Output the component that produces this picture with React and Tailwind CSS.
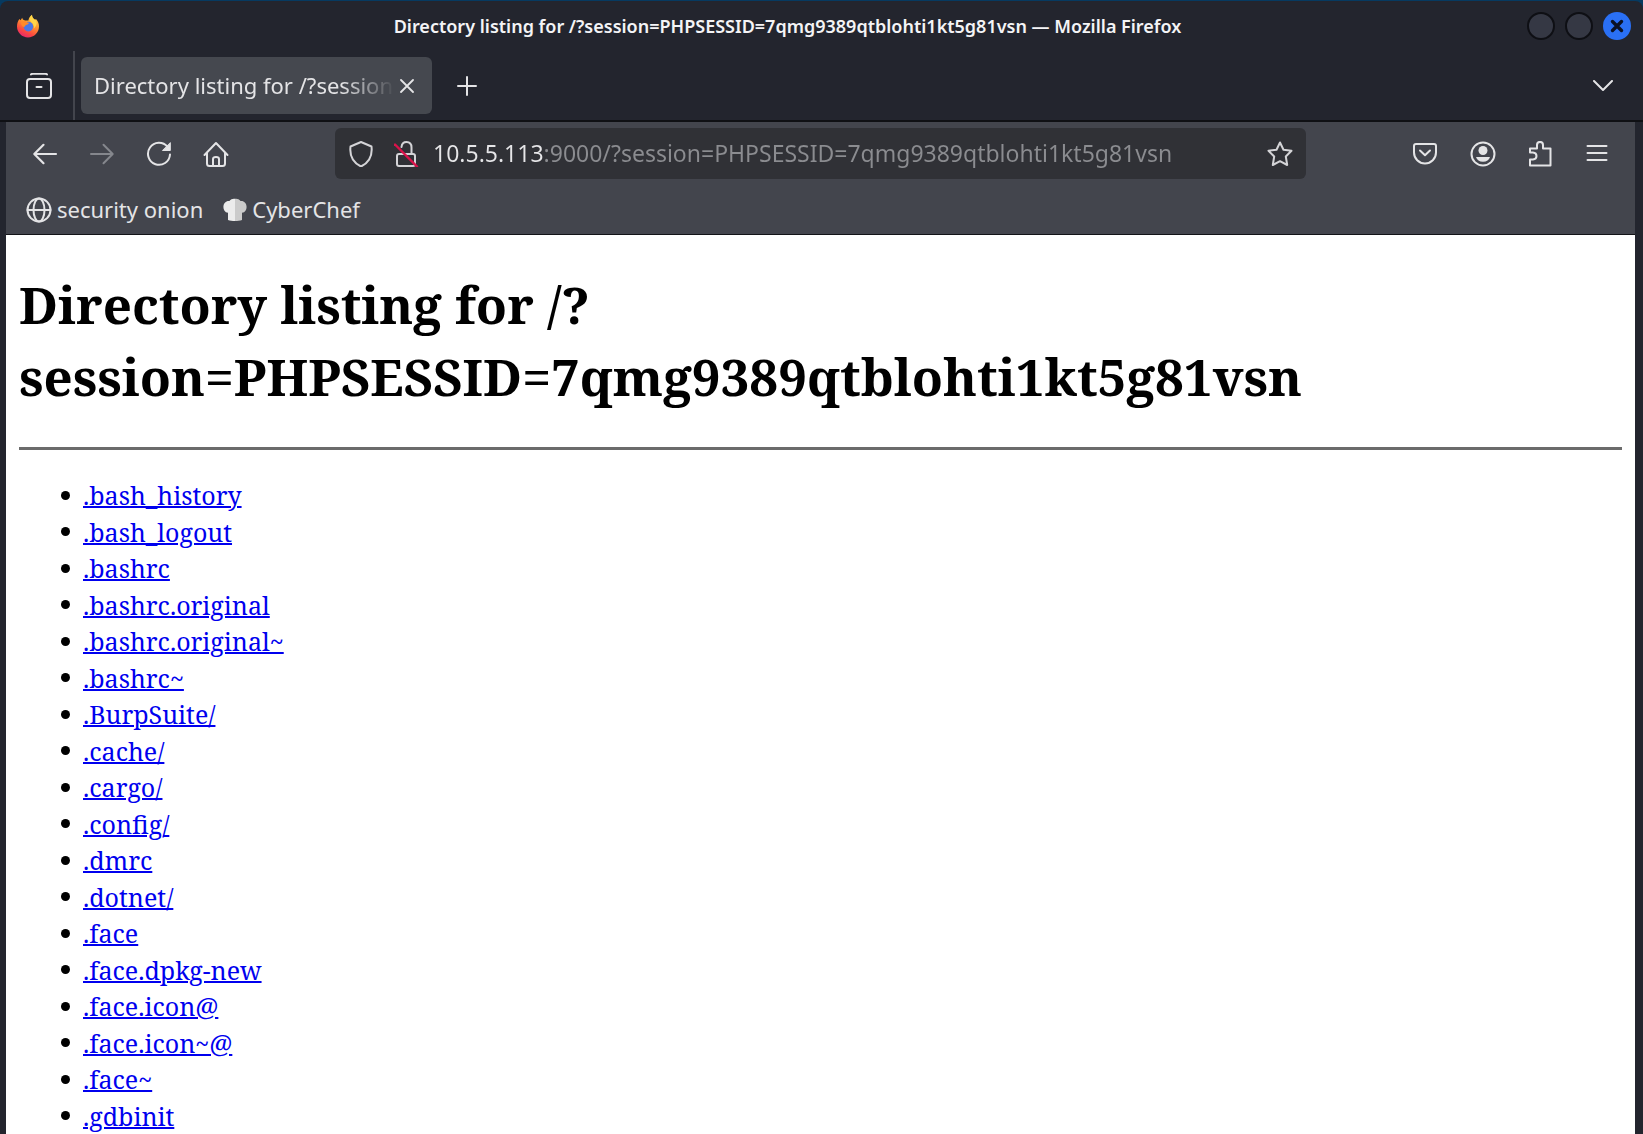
import React from "react";

const files = [
  ".bash_history", ".bash_logout", ".bashrc", ".bashrc.original", ".bashrc.original~", ".bashrc~",
  ".BurpSuite/", ".cache/", ".cargo/", ".config/", ".dmrc", ".dotnet/", ".face", ".face.dpkg-new",
  ".face.icon@", ".face.icon~@", ".face~", ".gdbinit",
];

function Icon({ size = "size-[26px]", children, ...rest }) {
  return (
    <svg viewBox="0 0 26 26" className={size} fill="none" stroke="currentColor" strokeWidth="2" strokeLinecap="round" strokeLinejoin="round" aria-hidden="true" {...rest}>
      {children}
    </svg>
  );
}

function ToolButton({ label, disabled, children }) {
  return (
    <button aria-label={label} disabled={disabled} className="flex h-12 w-[57px] shrink-0 items-center justify-center text-[#e4e4e6] disabled:text-[#85878d]">
      {children}
    </button>
  );
}

function FirefoxLogo() {
  return (
    <svg viewBox="0 0 24 24" className="size-6" aria-hidden="true">
      <defs>
        <linearGradient id="flame" x1="0.8" y1="0" x2="0.3" y2="1">
          <stop offset="0" stopColor="#ffe14d" />
          <stop offset="0.4" stopColor="#ff9a2e" />
          <stop offset="0.75" stopColor="#fb4a40" />
          <stop offset="1" stopColor="#e8256e" />
        </linearGradient>
      </defs>
      <path d="M3.400 5L4.600 6.200L6.200 3.800C6.600 5.600 7.600 6.200 9 6.400L12.400 6.600C12.800 4.200 14 2.400 16 .8C16 2.800 17 4.200 18.600 5.600L20.200 5.200C22.200 7.400 23 9.800 23 12.600A11 11 0 0 1 12 23.400A11 11 0 0 1 1 12.600C1 9.400 2 7 3.400 5Z" fill="url(#flame)" />
      <path d="M16 1C13.600 3 13 5.600 14.800 7.800C17 9.800 18.400 11.600 17.800 14.800C21.600 11 21.400 7.400 18.400 5.600C16.800 4.200 16 2.800 16 1Z" fill="#ffd648" />
      <circle cx="12.400" cy="12.600" r="4.800" fill="#4b78e6" />
      <path d="M5 8.400C7.400 6.600 10 7.200 11.400 8.400L13 8.800C12.600 10.400 10.800 10.800 9.600 11.200C9 11.800 9 12.800 8 13C6 12.600 5 10.600 5 8.400Z" fill="#ff8a2b" />
    </svg>
  );
}

function ChefHat() {
  return (
    <svg viewBox="0 0 24 24" className="size-6" aria-hidden="true">
      <path d="M5 22V14.800C1.800 14.400 .4 12 .4 9C.4 5 3.200 2.600 6.400 3C8 1 10 .4 12 .8V23C9.400 23 7 22.800 5 22Z" fill="#ececec" />
      <path d="M19 22V14.800C22.200 14.400 23.600 12 23.600 9C23.600 5 20.800 2.600 17.600 3C16 1 14 .4 12 .8V23C14.600 23 17 22.800 19 22Z" fill="#cbcbcb" />
    </svg>
  );
}

function TitleBar() {
  return (
    <header className="flex h-[50px] shrink-0 items-center pl-4 pr-3">
      <FirefoxLogo />
      <div className="flex-1 truncate pl-2 text-center text-[18px] font-semibold text-[#f4f4f6]">
        Directory listing for /?session=PHPSESSID=7qmg9389qtblohti1kt5g81vsn — Mozilla Firefox
      </div>
      <div className="flex gap-[10px]">
        <button aria-label="Minimize" className="size-7 rounded-full border-2 border-[#0e0f14] bg-[#353844]" />
        <button aria-label="Maximize" className="size-7 rounded-full border-2 border-[#0e0f14] bg-[#353844]" />
        <button aria-label="Close window" className="flex size-7 items-center justify-center rounded-full bg-[#2a70f5] text-[#0b1226]">
          <svg viewBox="0 0 14 14" className="size-[14px]" stroke="currentColor" strokeWidth="3.400" strokeLinecap="round" aria-hidden="true">
            <path d="M2.500 2.500L11.500 11.500M11.500 2.500L2.500 11.500" />
          </svg>
        </button>
      </div>
    </header>
  );
}

function TabStrip() {
  return (
    <div className="flex h-[71px] shrink-0 items-stretch border-b-2 border-[#0f1014] text-[#e4e4e6]">
      <button aria-label="Firefox View" className="flex w-[73px] shrink-0 items-center justify-center pl-1">
        <Icon>
          <path d="M5 1.500Q5.500 .8 7 .8H19Q20.500 .8 21 1.500" />
          <rect x="1" y="6" width="24" height="19" rx="3" />
          <path d="M10.500 14H15.500" />
        </Icon>
      </button>
      <div className="mr-[6px] w-[2px] bg-[#43454d]" />
      <div className="my-[6px] flex w-[351px] items-center rounded-md bg-[#45484f] px-[13px]">
        <span className="flex-1 overflow-hidden whitespace-nowrap text-[22px] [mask-image:linear-gradient(to_right,black_82%,transparent)]">
          Directory listing for /?session
        </span>
        <button aria-label="Close tab" className="flex size-6 shrink-0 items-center justify-center">
          <svg viewBox="0 0 14 14" className="size-[14px]" stroke="currentColor" strokeWidth="1.800" strokeLinecap="round" aria-hidden="true">
            <path d="M1 1L13 13M13 1L1 13" />
          </svg>
        </button>
      </div>
      <button aria-label="New tab" className="ml-[25px] flex items-center">
        <svg viewBox="0 0 20 20" className="size-5" stroke="currentColor" strokeWidth="2" strokeLinecap="round" aria-hidden="true">
          <path d="M10 1V19M1 10H19" />
        </svg>
      </button>
      <button aria-label="List all tabs" className="ml-auto mr-[30px] flex items-center">
        <svg viewBox="0 0 20 12" className="h-3 w-5" fill="none" stroke="currentColor" strokeWidth="2" strokeLinecap="round" strokeLinejoin="round" aria-hidden="true">
          <path d="M1 1L10 10L19 1" />
        </svg>
      </button>
    </div>
  );
}

function NavBar() {
  return (
    <nav className="flex h-[63px] items-center px-[10px]">
      <ToolButton label="Back">
        <Icon strokeWidth="2.200"><path d="M24 13H2.500M11.500 3.800L2.300 13L11.500 22.200" /></Icon>
      </ToolButton>
      <ToolButton label="Forward" disabled>
        <Icon><path d="M2 13H23.500M14.500 3.800L23.700 13L14.500 22.200" /></Icon>
      </ToolButton>
      <ToolButton label="Reload">
        <Icon>
          <path d="M21.500 5.800A11 11 0 1 0 24 13.500" />
          <path d="M24.300 2V9.500H16.800Z" fill="currentColor" strokeWidth="1" />
        </Icon>
      </ToolButton>
      <ToolButton label="Home">
        <Icon>
          <path d="M1.500 14L13 2L24.500 14M4 12V22.500Q4 25 6.500 25H19.500Q22 25 22 22.500V12" />
          <path d="M10 25V18Q10 16 13 16Q16 16 16 18V25" />
        </Icon>
      </ToolButton>
      <div className="mx-[91px] flex h-[51px] min-w-0 flex-1 items-center rounded-md bg-[#303136] px-[13px] text-[#d4d4d7]">
        <Icon><path d="M13 1L23.500 5.500C24.500 14 21 21.500 13 25.500C5 21.500 1.500 14 2.500 5.500Z" /></Icon>
        <Icon size="ml-5 size-[26px]">
          <path d="M17.500 13H19Q21 13 21 15V23Q21 25 19 25H5Q3 25 3 23V15Q3 13 5 13H17.500V6.500Q17.500 1 12.500 1Q8 1 7.500 6" />
          <path d="M1 3.500L23 25.500" stroke="#d9124a" strokeWidth="2.400" />
        </Icon>
        <input
          aria-label="Address"
          defaultValue="10.5.5.113:9000/?session=PHPSESSID=7qmg9389qtblohti1kt5g81vsn"
          className="ml-[13px] min-w-0 flex-1 bg-[linear-gradient(90deg,#e6e6e8_110px,#8b8c90_110px)] bg-clip-text text-[23px] text-transparent outline-none"
        />
        <button aria-label="Bookmark this page">
          <Icon><path d="M13 1.500L16.500 8.800L24.500 9.800L18.800 15.500L20.200 24L13 20.200L5.800 24L7.200 15.500L1.500 9.800L9.500 8.800Z" /></Icon>
        </button>
      </div>
      <ToolButton label="Save to Pocket">
        <Icon>
          <path d="M3 3H21Q23 3 23 5V11.500A11 11 0 0 1 1 11.500V5Q1 3 3 3Z" />
          <path d="M7 9.500L12 14.200L17 9.500" />
        </Icon>
      </ToolButton>
      <ToolButton label="Account">
        <Icon>
          <circle cx="13" cy="13" r="11.500" />
          <circle cx="13" cy="9.500" r="4.500" fill="currentColor" stroke="none" />
          <path d="M6 16H20Q18.500 20.800 13 20.800Q7.500 20.800 6 16Z" fill="currentColor" stroke="none" />
        </Icon>
      </ToolButton>
      <ToolButton label="Extensions">
        <Icon>
          <path d="M3 11.500V7.500H10V4Q10 .9 13 .9Q16 .9 16 4V7.500H23.500V24.500H3V18.500H6Q9.500 18.300 9.500 15Q9.500 11.700 6 11.500Z" />
        </Icon>
      </ToolButton>
      <ToolButton label="Open application menu">
        <Icon><path d="M3.500 5H22.500M3.500 12H22.500M3.500 19H22.500" /></Icon>
      </ToolButton>
    </nav>
  );
}

function BookmarksBar() {
  return (
    <div className="flex h-[50px] items-center gap-5 border-b border-[#131418] pl-5 text-[22px] text-[#e4e4e6]">
      <a href="#security-onion" className="flex items-center gap-[5px]">
        <Icon>
          <circle cx="13" cy="13" r="11.500" />
          <ellipse cx="13" cy="13" rx="5.500" ry="11.500" />
          <path d="M1.500 13H24.500" />
        </Icon>
        security onion
      </a>
      <a href="#cyberchef" className="flex items-center gap-[5px]">
        <ChefHat />
        CyberChef
      </a>
    </div>
  );
}

export default function App() {
  return (
    <div className="h-screen overflow-hidden bg-[#063a61] pt-px font-['Noto_Sans',sans-serif]">
      <div className="flex h-full flex-col rounded-t-lg bg-[#23252e]">
        <TitleBar />
        <TabStrip />
        <div className="ml-[6px] mr-2 bg-[#43454d]">
          <NavBar />
          <BookmarksBar />
        </div>
        <main className="ml-[6px] mr-2 min-h-0 flex-1 overflow-hidden bg-white px-[13px] pt-[33px] font-['Noto_Serif',serif] text-black">
          <h1 className="text-[51px] font-bold leading-[72px]">
            Directory listing for /?<wbr />session=PHPSESSID=7qmg9389qtblohti1kt5g81vsn
          </h1>
          <hr className="mt-[35px] border-0 border-t-3 border-[#6b6b6b]" />
          <ul className="mt-[27px] pl-[42px] text-[25px] leading-[1.46]">
            {files.map((name) => (
              <li key={name} className="flex items-center gap-[13px] before:size-[9px] before:rounded-full before:bg-black">
                <a href={"#" + name} className="text-[#0000ee] underline decoration-2">{name}</a>
              </li>
            ))}
          </ul>
        </main>
      </div>
    </div>
  );
}
